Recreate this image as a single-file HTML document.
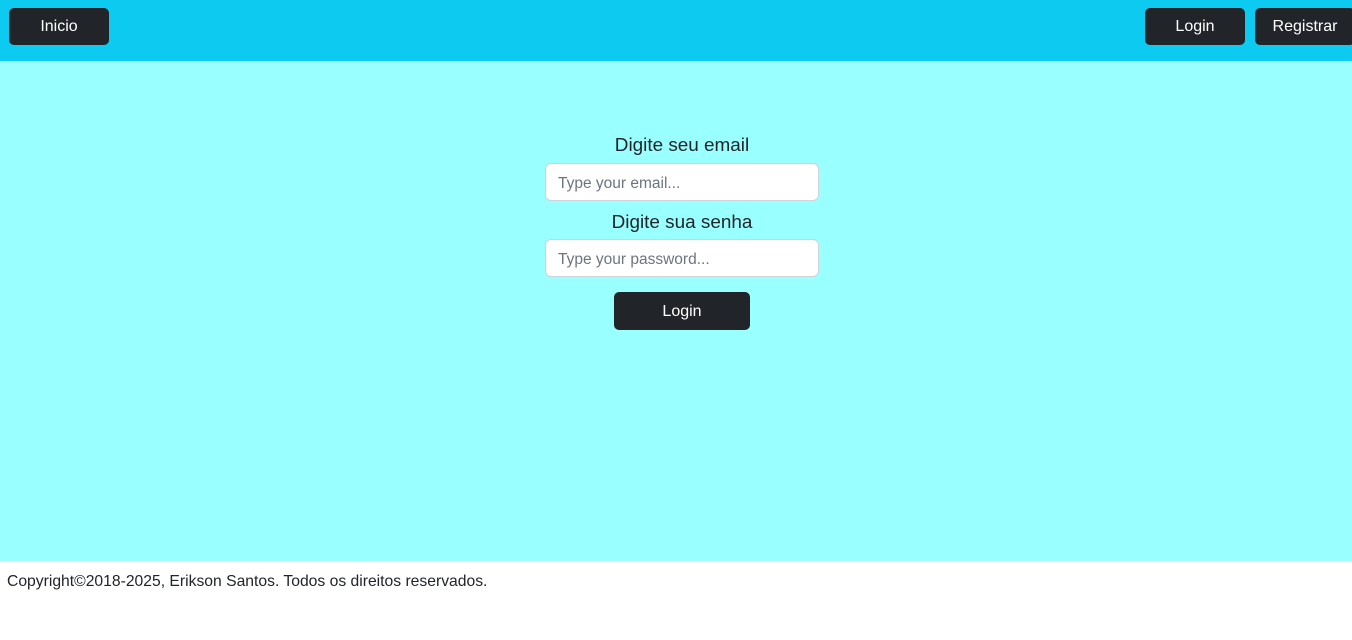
<!DOCTYPE html>
<html><head><meta charset="utf-8"><style>
*{box-sizing:border-box;margin:0;padding:0}
body{width:1352px;height:640px;font-family:"Liberation Sans",sans-serif;background:#fff;position:relative;overflow:hidden;color:#212529}
.nav{position:absolute;left:0;top:0;width:1352px;height:61px;background:#0dcaf0}
.btn{position:absolute;background:#212529;color:#fff;border-radius:5px;font-size:16px;display:flex;align-items:center;justify-content:center;padding-top:1px}
.main{position:absolute;top:61px;left:0;width:1352px;height:500px;background:#9affff}
.lbl{position:absolute;width:1352px;text-align:center;font-size:18.9px}
.inp{position:absolute;left:545px;width:274px;height:38px;background:#fff;border:1px solid #ced4da;border-radius:6px;font-size:15.5px;color:#6c757d;padding:11px 12px}
.foot{position:absolute;left:7px;top:573px;font-size:15.7px}
</style></head><body>
<div class="nav"></div>
<div class="btn" style="left:9px;top:8px;width:100px;height:37px">Inicio</div>
<div class="btn" style="left:1145px;top:8px;width:100px;height:37px">Login</div>
<div class="btn" style="left:1255px;top:8px;width:100px;height:37px">Registrar</div>
<div class="main"></div>
<div class="lbl" style="top:135px;left:6px">Digite seu email</div>
<div class="inp" style="top:163px">Type your email...</div>
<div class="lbl" style="top:212px;left:6px">Digite sua senha</div>
<div class="inp" style="top:239px">Type your password...</div>
<div class="btn" style="left:614px;top:292px;width:136px;height:38px">Login</div>
<div class="foot">Copyright©2018-2025, Erikson Santos. Todos os direitos reservados.</div>
</body></html>
